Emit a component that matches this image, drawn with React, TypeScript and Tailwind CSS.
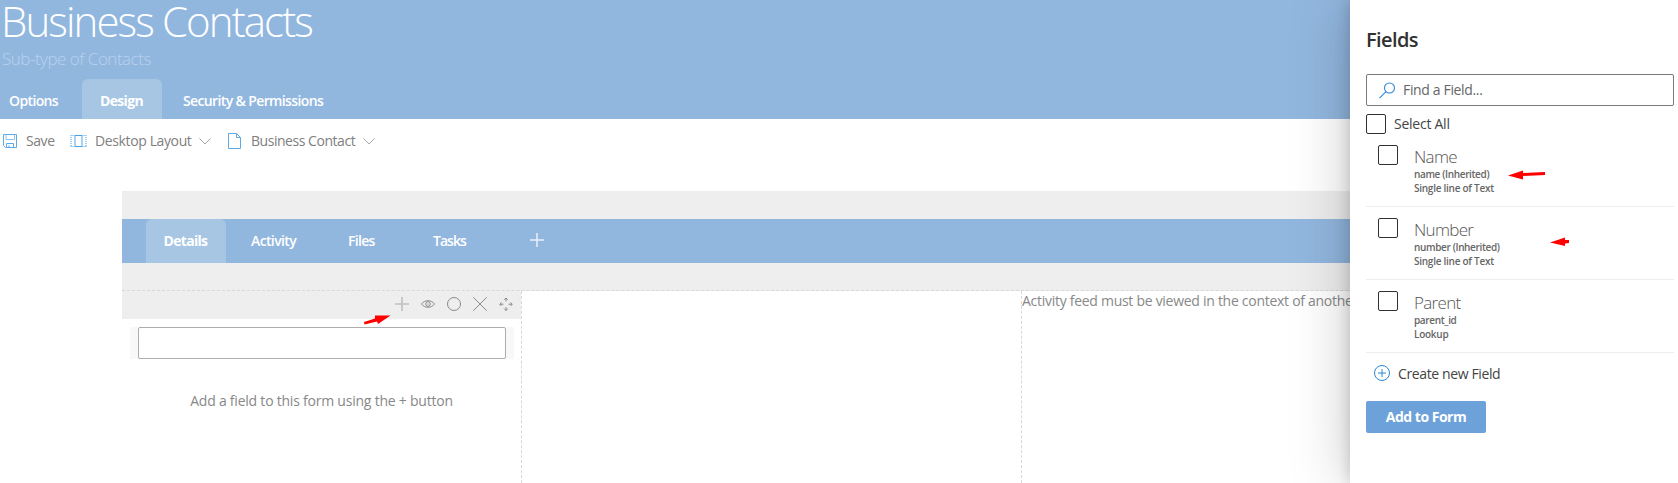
import React from "react";

function SaveIcon() {
  return (
    <svg width="14" height="14" viewBox="0 0 14 14" fill="none" stroke="#5fa9e6" className="shrink-0">
      <path d="M.5.5h13v13h-11l-2-2z" />
      <path d="M3 .5v5h8.500v-5" stroke="#8cc3ee" />
      <path d="M3.500 13.500v-4h7v4M6 11.500v2" />
    </svg>
  );
}

function LayoutIcon() {
  return (
    <svg width="17" height="12" viewBox="0 0 17 12" fill="none" className="shrink-0">
      <path d="M5 0v12M12 0v12" stroke="#8fc4ed" strokeWidth="1.500" />
      <path d="M0 .5h17M0 11.500h17" stroke="#a9d1f2" />
      <path d="M5 .5h7M5 11.500h7" stroke="#4c9fe2" />
      <path d="M1 2v9M16 2v9" stroke="#a9d1f2" strokeWidth="2" strokeDasharray="1 1" />
    </svg>
  );
}

function PageIcon() {
  return (
    <svg width="13" height="16" viewBox="0 0 13 16" fill="none" stroke="#5fa9e6" className="shrink-0">
      <path d="M.5.5h8l4 4v11H.5z" />
      <path d="M8.500.5v4h4" />
    </svg>
  );
}

function Chevron() {
  return (
    <svg width="12" height="7" viewBox="0 0 12 7" fill="none" stroke="#a8a8a8" className="shrink-0">
      <path d="M.4.4 6 6 11.600.4" />
    </svg>
  );
}

function Arrow({ points, w, h }: { points: string; w: number; h: number }) {
  return (
    <svg width={w} height={h} viewBox={`0 0 ${w} ${h}`} fill="#ff0000">
      <polygon points={points} />
    </svg>
  );
}

function SectionTools() {
  return (
    <div className="flex h-7 items-center bg-[#eeeeee] pb-0.5 pl-[273px] text-[#8a8a8a]">
      <svg width="14" height="14" viewBox="0 0 14 14" fill="none" className="shrink-0">
        <path d="M7 0v14M0 7h14" stroke="#c0c0c0" strokeWidth="1.600" />
      </svg>
      <svg width="14" height="8" viewBox="0 0 14 8" fill="none" stroke="currentColor" className="ml-3 shrink-0">
        <path d="M.5 4C3.500-.4 10.500-.4 13.500 4 10.500 8.400 3.500 8.400.5 4z" />
        <circle cx="7" cy="4" r="2.300" />
        <circle cx="7" cy="4" r=".6" fill="currentColor" stroke="none" />
      </svg>
      <svg width="14" height="14" viewBox="0 0 14 14" fill="none" stroke="currentColor" className="ml-3 shrink-0">
        <circle cx="7" cy="7" r="6.500" />
      </svg>
      <svg width="14" height="14" viewBox="0 0 14 14" fill="none" stroke="currentColor" className="ml-3 shrink-0">
        <path d="m.3.3 13.400 13.400M13.700.3.3 13.700" />
      </svg>
      <svg width="14" height="14" viewBox="0 0 14 14" fill="none" stroke="currentColor" className="ml-3 shrink-0">
        <path d="M7 1v3.500M7 10v3.500M1 7.200h3.500M9.500 7.200H13M5.200 2.800 7 1l1.800 1.800M5.200 11.700 7 13.500l1.800-1.800M2.500 5.400.7 7.200 2.500 9M11.500 5.400l1.800 1.800L11.500 9" />
      </svg>
    </div>
  );
}

function Checkbox() {
  return <span className="block size-5 shrink-0 rounded-[2px] border border-[#323130] bg-white" />;
}

function FieldRow({ title, id, kind }: { title: string; id: string; kind: string }) {
  return (
    <div className="flex h-[73px] border-b border-[#eeeeee] pt-[11px] pl-3">
      <Checkbox />
      <div className="ml-4 whitespace-nowrap">
        <div className="h-[22px] text-[17px] leading-[24px] font-[350] tracking-[-0.04em] text-[#555555]">{title}</div>
        <div className="text-[10px] leading-[14px] font-semibold tracking-[-0.036em] text-[#666666]">{id}</div>
        <div className="text-[10px] leading-[14px] font-semibold tracking-[-0.026em] text-[#666666]">{kind}</div>
      </div>
    </div>
  );
}

export default function App() {
  return (
    <div className="relative h-[483px] w-[1678px] overflow-hidden bg-white font-['Open_Sans','Noto_Sans',sans-serif] whitespace-nowrap">
      <header className="flex h-[119px] flex-col bg-[#92b7df] text-white">
        <h1 className="h-[49px] pl-[1px] text-[42px] leading-[42px] font-[330] tracking-[-0.0455em]">Business Contacts</h1>
        <div className="h-[30px] pl-[2px] text-[17px] leading-[19px] font-[350] tracking-[-0.029em] text-[#b9d1ec]">Sub-type of Contacts</div>
        <nav className="flex h-10 text-[14px] leading-[44px] font-semibold">
          <span className="w-[82px] pl-[9px] tracking-[-0.045em]">Options</span>
          <span className="w-20 rounded-t-md bg-[#a7c6e4] pr-px text-center font-bold tracking-[-0.05em]">Design</span>
          <span className="pl-[21px] tracking-[-0.045em]">Security &amp; Permissions</span>
        </nav>
      </header>

      <div className="flex h-[72px] items-start pl-[3px] text-[14px] leading-5 text-[#808080]">
        <div className="mt-3 flex h-5 items-center">
          <SaveIcon />
          <span className="ml-[9px] w-[44px] tracking-[-0.03em]">Save</span>
          <LayoutIcon />
          <span className="ml-2 w-[104px] tracking-[-0.027em]">Desktop Layout</span>
          <Chevron />
          <span className="ml-[17px] flex"><PageIcon /></span>
          <span className="ml-[10px] w-[112px] tracking-[-0.033em]">Business Contact</span>
          <Chevron />
        </div>
      </div>

      <main className="ml-[122px] flex h-[292px] flex-col">
        <div className="h-7 bg-[#eeeeee]" />
        <nav className="flex h-11 bg-[#92b7df] pl-6 text-[14px] leading-[43px] font-semibold text-white">
          <span className="w-20 rounded-t-md bg-[#a7c6e4] pr-px text-center font-bold tracking-[-0.05em]">Details</span>
          <span className="w-[97px] pl-[25px] tracking-[-0.045em]">Activity</span>
          <span className="w-[86px] pl-[25px] tracking-[-0.05em]">Files</span>
          <span className="w-[120px] pl-6 tracking-[-0.07em]">Tasks</span>
          <svg width="16" height="16" viewBox="0 0 16 16" fill="none" stroke="#e8f1fa" strokeWidth="1.500" className="mt-[13px]">
            <path d="M8 1v14M1 8h14" />
          </svg>
        </nav>
        <div className="h-7 border-b border-dashed border-[#d8d8d8] bg-[#eeeeee]" />
        <div className="flex flex-1 text-[14px] text-[#888888]">
          <section className="w-[400px] border-r border-dashed border-[#d8d8d8]">
            <SectionTools />
            <div className="mx-2 mt-2 h-8 w-[384px] bg-[#f8f8f8] px-2">
              <div className="h-8 rounded-[2px] border border-[#adadad] bg-white" />
            </div>
            <p className="mt-[32px] text-center leading-5 tracking-[-0.016em]">Add a field to this form using the + button</p>
          </section>
          <section className="w-[500px] border-r border-dashed border-[#d8d8d8]" />
          <section className="leading-5 tracking-[-0.02em]">Activity feed must be viewed in the context of another record</section>
        </div>
      </main>

      <aside className="absolute inset-y-0 right-0 flex w-[328px] flex-col bg-white pr-1 pl-4 shadow-[0_0_57px_rgba(0,0,0,0.22),0_0_14px_rgba(0,0,0,0.18)]">
        <h2 className="mt-[26px] h-12 text-[20px] leading-7 font-semibold tracking-[-0.03em] text-[#323130]">Fields</h2>
        <div className="flex h-8 items-center rounded-[2px] border border-[#7a7a7a] pl-3 text-[14px] text-[#666666]">
          <svg width="17" height="17" viewBox="0 0 17 17" fill="none" stroke="#2b88d8" strokeWidth="1.100">
            <circle cx="10.500" cy="6" r="5" />
            <path d="m7 9.700-6.500 6.500" />
          </svg>
          <span className="ml-[7px] pb-px tracking-[-0.025em]">Find a Field...</span>
        </div>
        <div className="mt-2 flex h-5 items-center text-[14px] text-[#444444]">
          <Checkbox />
          <span className="ml-2 pb-px tracking-[-0.018em]">Select All</span>
        </div>
        <div className="h-[219px]">
          <FieldRow title="Name" id="name (Inherited)" kind="Single line of Text" />
          <FieldRow title="Number" id="number (Inherited)" kind="Single line of Text" />
          <FieldRow title="Parent" id="parent_id" kind="Lookup" />
        </div>
        <div className="mt-[12px] flex h-4 items-center pl-2 text-[14px] text-[#444444]">
          <svg width="16" height="16" viewBox="0 0 16 16" fill="none" stroke="#2b88d8">
            <circle cx="8" cy="8" r="7.500" />
            <path d="M8 4v8M4 8h8" />
          </svg>
          <span className="ml-2 tracking-[-0.027em]">Create new Field</span>
        </div>
        <button className="mt-5 h-8 w-[120px] rounded-[2px] bg-[#6ca1da] pb-px text-[14px] font-bold tracking-[-0.036em] text-white">Add to Form</button>
      </aside>

      <div className="absolute top-[315px] left-[364px]"><Arrow w={27} h={10} points="0,7 11,3.500 11,0.500 26.500,0.500 14,9 13,6.500 0.500,9.500" /></div>
      <div className="absolute top-[170px] left-[1508px]"><Arrow w={37} h={10} points="0,5.500 15,0.500 15,3 37,2 37,5 15,6 15,9.500" /></div>
      <div className="absolute top-[237px] left-[1550px]"><Arrow w={19} h={10} points="0,5.500 15,0.500 15,3 19,3 19,6 15,6.500 15,9" /></div>
    </div>
  );
}
